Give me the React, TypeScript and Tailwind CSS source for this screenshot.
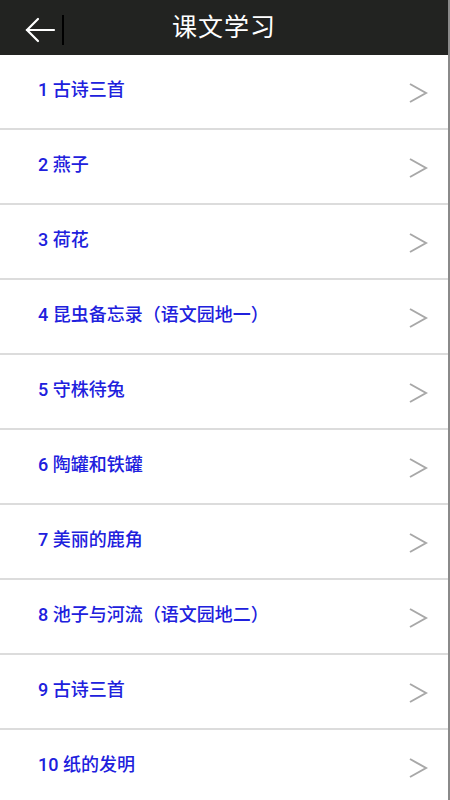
const lessons = [
  '1 古诗三首',
  '2 燕子',
  '3 荷花',
  '4 昆虫备忘录（语文园地一）',
  '5 守株待兔',
  '6 陶罐和铁罐',
  '7 美丽的鹿角',
  '8 池子与河流（语文园地二）',
  '9 古诗三首',
  '10 纸的发明',
];

const font = { fontFamily: '"Roboto", "Noto Sans CJK SC", sans-serif' };

const App = () => {
  return (
    <div className="w-[450px] h-[800px] overflow-hidden bg-white border-r-2 border-[#8a8a8a]" style={font}>
      <div className="relative h-[55px] bg-[#222321] flex items-center justify-center">
        <div className="absolute left-[24px] top-[15px] flex items-center">
          <svg width="32" height="26" viewBox="0 0 32 26" fill="none" stroke="#ffffff" strokeWidth="2.2" strokeLinecap="round">
            <path d="M30 13H3" />
            <path d="M14 2L3 13l11 11" />
          </svg>
          <div className="ml-[6px] w-[2px] h-[30px] bg-black" />
        </div>
        <h1 className="text-white text-[25px] tracking-[1px]">课文学习</h1>
      </div>
      <ul>
        {lessons.map((name) => (
          <li
            key={name}
            className="h-[75px] flex items-center justify-between pl-[38px] pr-[20px] border-b-2 border-[#dcdcdc]"
          >
            <span className="text-[18px] font-medium text-[#2020dd] -mt-[5px]">{name}</span>
            <svg width="20" height="24" viewBox="0 0 20 24" fill="none" stroke="#a8a8a8" strokeWidth="2" className="mt-[3px]">
              <path d="M2 3l16 9-16 9" />
            </svg>
          </li>
        ))}
      </ul>
    </div>
  );
};

export default App;
